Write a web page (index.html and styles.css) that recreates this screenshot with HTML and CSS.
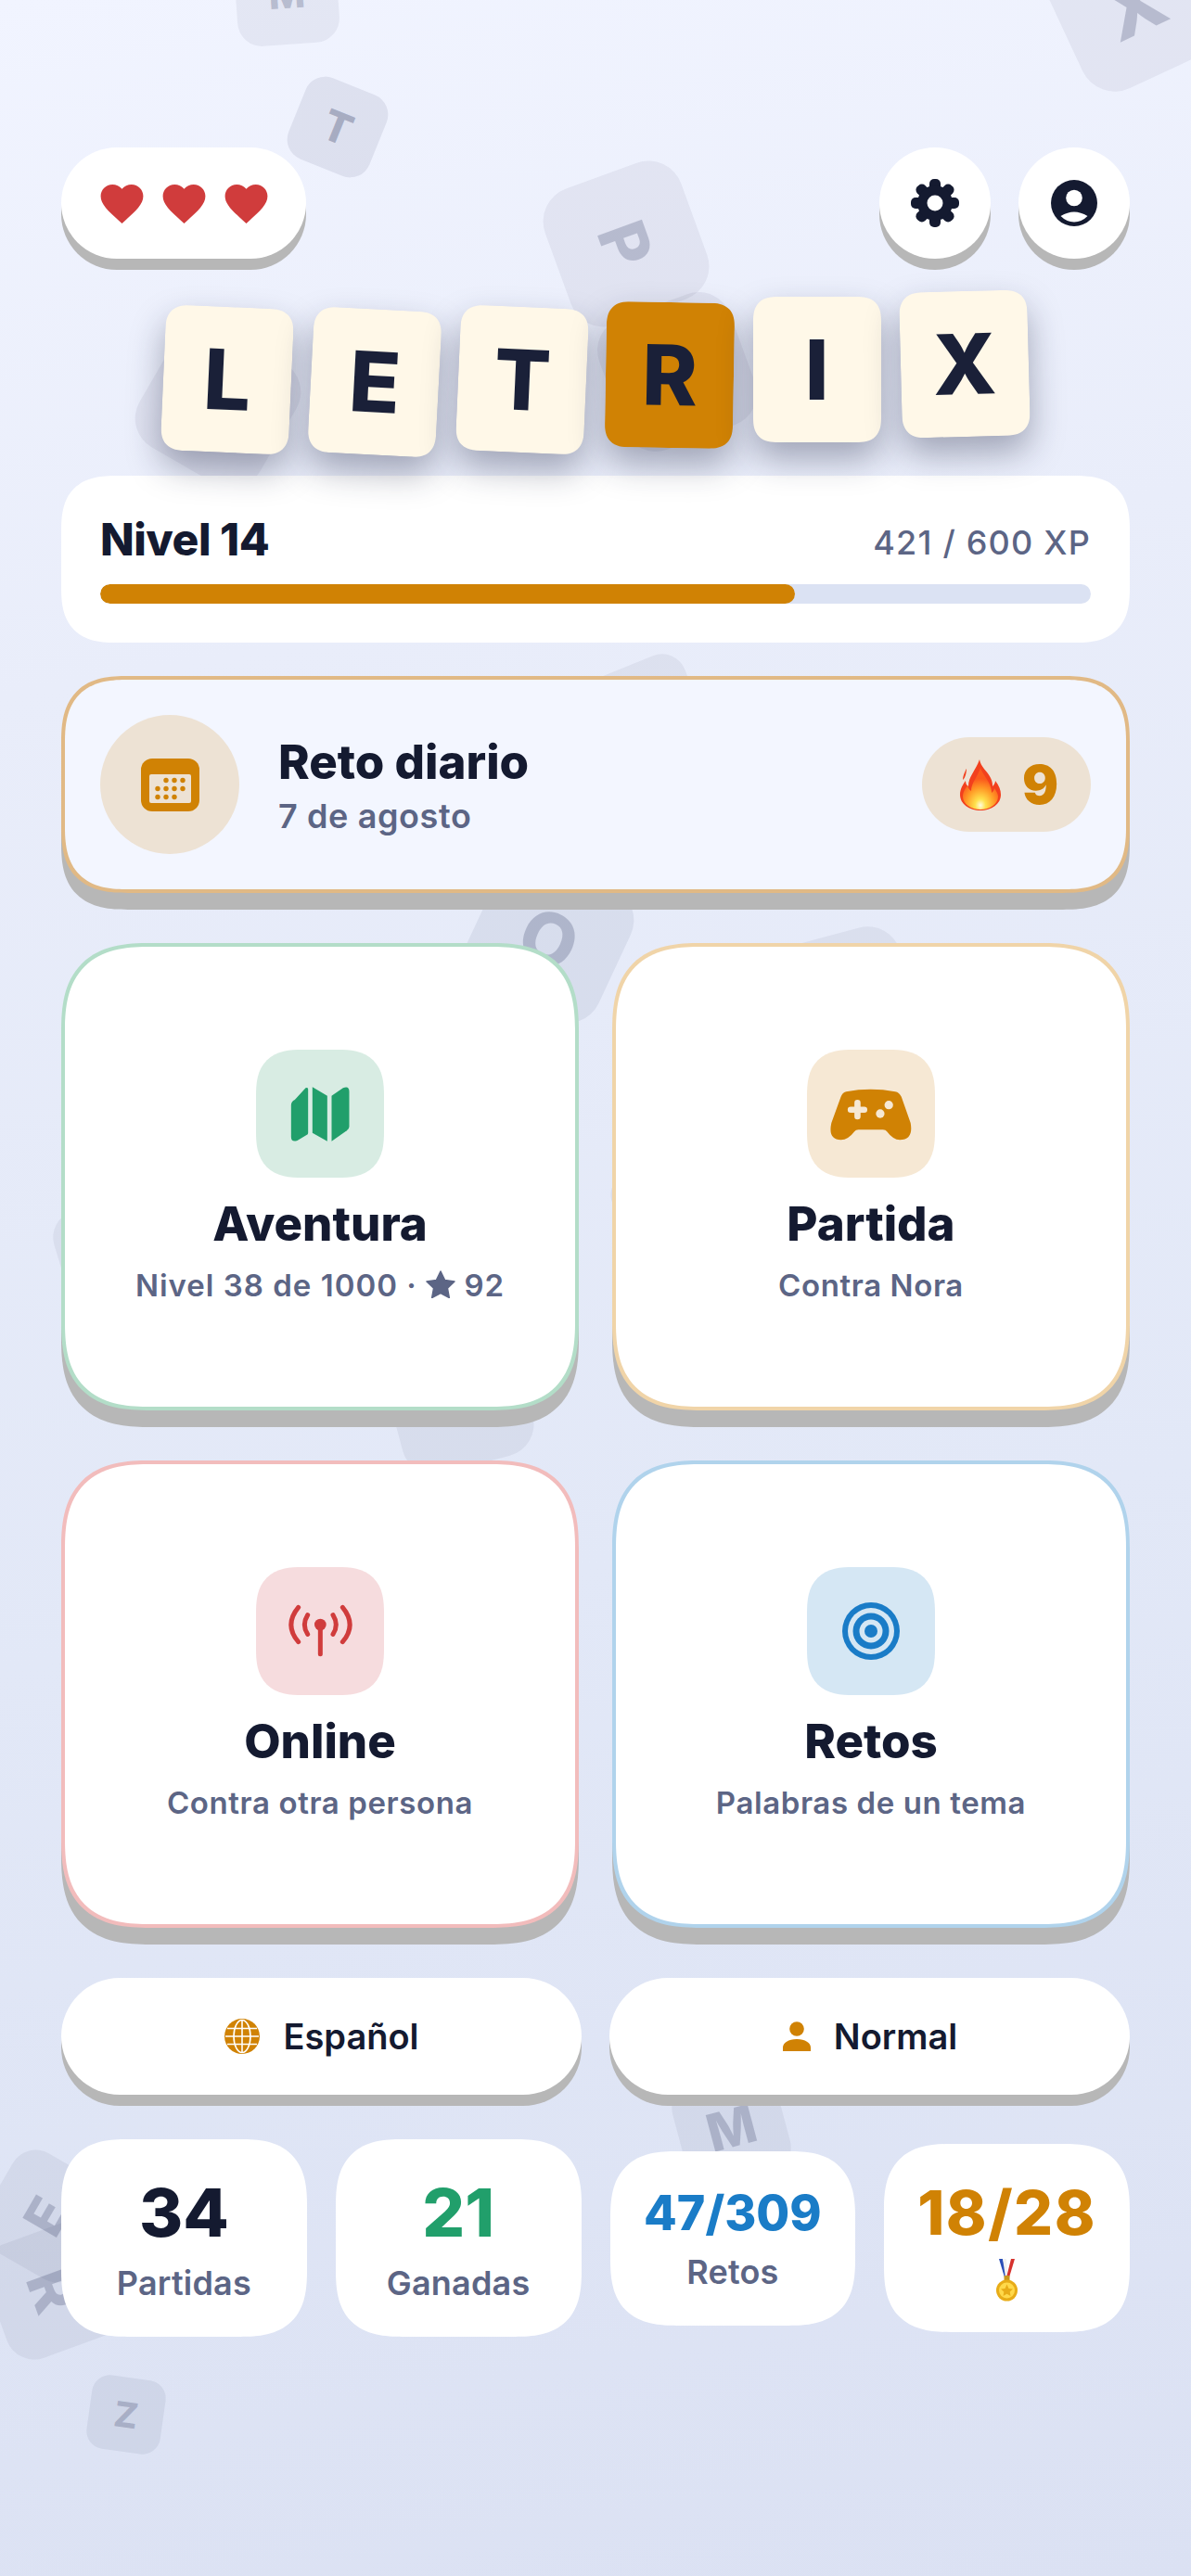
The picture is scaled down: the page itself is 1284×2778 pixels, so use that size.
FILE: index.html
```html
<!DOCTYPE html>
<html lang="es">
<head>
<meta charset="utf-8">
<title>Letrix</title>
<link rel="stylesheet" href="styles.css">
</head>
<body>
<div class="screen">
  <div class="scatter">
    <div class="bt t-m">M</div>
    <div class="bt t-x">X</div>
    <div class="bt t-t">T</div>
    <div class="bt t-p">P</div>
    <div class="bt t-l1"></div>
    <div class="bt t-r1"></div>
    <div class="bt t-d"></div>
    <div class="bt t-o">O</div>
    <div class="bt t-q"></div>
    <div class="bt t-a"></div>
    <div class="bt t-b"></div>
    <div class="bt t-c"></div>
    <div class="bt t-mm">M</div>
    <div class="bt t-e">E</div>
    <div class="bt t-rr">R</div>
    <div class="bt t-z">Z</div>
  </div>

  <main class="content">
    <header class="topbar">
      <div class="lives raised">
        <svg class="heart" viewBox="0 0 24 24"><path d="M12 21.35l-1.45-1.32C5.4 15.36 2 12.28 2 8.5 2 5.42 4.42 3 7.5 3c1.74 0 3.41.81 4.5 2.09C13.09 3.81 14.76 3 16.5 3 19.58 3 22 5.42 22 8.5c0 3.78-3.4 6.86-8.55 11.54L12 21.35z"/></svg>
        <svg class="heart" viewBox="0 0 24 24"><path d="M12 21.35l-1.45-1.32C5.4 15.36 2 12.28 2 8.5 2 5.42 4.42 3 7.5 3c1.74 0 3.41.81 4.5 2.09C13.09 3.81 14.76 3 16.5 3 19.58 3 22 5.42 22 8.5c0 3.78-3.4 6.86-8.55 11.54L12 21.35z"/></svg>
        <svg class="heart" viewBox="0 0 24 24"><path d="M12 21.35l-1.45-1.32C5.4 15.36 2 12.28 2 8.5 2 5.42 4.42 3 7.5 3c1.74 0 3.41.81 4.5 2.09C13.09 3.81 14.76 3 16.5 3 19.58 3 22 5.42 22 8.5c0 3.78-3.4 6.86-8.55 11.54L12 21.35z"/></svg>
      </div>
      <div class="top-actions">
        <div class="round raised">
          <svg class="top-icon" viewBox="-30 -30 60 60">
            <g class="gear">
              <rect x="-6" y="-26" width="12" height="52" rx="5"/>
              <rect x="-6" y="-26" width="12" height="52" rx="5" transform="rotate(45)"/>
              <rect x="-6" y="-26" width="12" height="52" rx="5" transform="rotate(90)"/>
              <rect x="-6" y="-26" width="12" height="52" rx="5" transform="rotate(135)"/>
              <circle r="19"/>
            </g>
            <circle class="cut" r="8.5"/>
          </svg>
        </div>
        <div class="round raised">
          <svg class="top-icon" viewBox="-30 -30 60 60">
            <circle class="dark" r="25"/>
            <circle class="cut" cy="-5.5" r="8.8"/>
            <path class="cut" d="M-14.5 14Q-7 9.5 0 9.5Q7 9.5 14.5 14Q8 20.5 0 20.5Q-8 20.5-14.5 14Z"/>
          </svg>
        </div>
      </div>
    </header>

    <h1 class="logo">
      <span class="lt lt-1">L</span><span class="lt lt-2">E</span><span class="lt lt-3">T</span><span class="lt lt-4 lt-hot">R</span><span class="lt lt-5">I</span><span class="lt lt-6">X</span>
    </h1>

    <section class="level">
      <div class="level-head">
        <span class="level-name">Nivel 14</span>
        <span class="level-xp">421 / 600 XP</span>
      </div>
      <div class="track"><div class="fill"></div></div>
    </section>

    <section class="daily">
      <div class="daily-badge">
        <svg class="cal" viewBox="0 0 63 57">
          <rect class="cal-body" width="63" height="57" rx="12"/>
          <rect class="cal-page" x="9" y="17" width="45" height="31" rx="2"/>
          <g class="cal-dots">
            <circle cx="27" cy="23.5" r="2.7"/><circle cx="36" cy="23.5" r="2.7"/><circle cx="45" cy="23.5" r="2.7"/>
            <circle cx="18" cy="32.5" r="2.7"/><circle cx="27" cy="32.5" r="2.7"/><circle cx="36" cy="32.5" r="2.7"/><circle cx="45" cy="32.5" r="2.7"/>
            <circle cx="18" cy="41.5" r="2.7"/><circle cx="27" cy="41.5" r="2.7"/><circle cx="36" cy="41.5" r="2.7"/>
          </g>
        </svg>
      </div>
      <div class="daily-text">
        <div class="daily-title">Reto diario</div>
        <div class="daily-date">7 de agosto</div>
      </div>
      <div class="streak">
        <svg class="flame" viewBox="0 0 44 55">
          <defs>
            <radialGradient id="fg" cx="0.5" cy="0.9" r="0.75">
              <stop offset="0" stop-color="#fffde0"/>
              <stop offset="0.2" stop-color="#ffe14d"/>
              <stop offset="0.55" stop-color="#ff9a26"/>
              <stop offset="0.85" stop-color="#fb5a1c"/>
            </radialGradient>
          </defs>
          <path fill="#f2401d" d="M21 0C22 8 30 13 33 20C35 24 35 27 35 29C37 27 38 25 38 23C42 28 44 33 44 38C44 48 34 55 22 55C10 55 0 48 0 38C0 32 3 27 6 23C6 26 7 28 9 29C9 18 17 12 21 0Z"/>
          <path fill="url(#fg)" d="M22 9C24 16 31 22 33 30C34 33 34 35 34 36C36 34 37 33 37 31C39 34 41 37 41 40C41 48 32 54 22 54C12 54 3 48 3 40C3 35 6 31 8 28C9 31 10 33 12 34C12 25 19 19 22 9Z"/>
          <path fill="#f2401d" d="M5 14C6 12 6 11 7 10C7 13 6 20 3 22C3 19 4 16 5 14Z"/>
        </svg>
        <span class="streak-num">9</span>
      </div>
    </section>

    <section class="modes">
      <article class="mode mode-green">
        <div class="mode-icon">
          <svg class="ic-map" viewBox="155 183 197 183">
            <path d="M172 228L207 190Q215 186 215 194V335Q215 340 210 342L180 360Q160 366 160 348V245Q160 234 172 228Z"/>
            <path d="M229 187L277 215V362L229 335Z"/>
            <path d="M291 215L328 190Q348 182 348 202V315Q348 322 340 328L291 362Z"/>
          </svg>
        </div>
        <h2 class="mode-title">Aventura</h2>
        <p class="mode-sub mode-sub-wide">Nivel 38 de 1000 · <svg class="star" viewBox="0 0 32 30"><path d="M16 1L20.6 10.6L31 12L23.4 19.2L25.3 29.5L16 24.5L6.7 29.5L8.6 19.2L1 12L11.4 10.6Z"/></svg> 92</p>
      </article>
      <article class="mode mode-orange">
        <div class="mode-icon">
          <svg class="ic-pad" viewBox="130 183 272 177">
            <path d="M185 198Q265 183 345 198Q358 200 365 215L395 300Q405 355 360 355Q338 355 318 328Q314 322 305 322H225Q216 322 212 328Q192 355 168 355Q125 355 137 300L168 215Q172 202 185 198Z"/>
            <path class="pad-mark" d="M222 235V279M200 257H244"/>
            <circle class="pad-dot" cx="296" cy="270" r="14"/>
            <circle class="pad-dot" cx="324" cy="242" r="14"/>
          </svg>
        </div>
        <h2 class="mode-title">Partida</h2>
        <p class="mode-sub">Contra Nora</p>
      </article>
      <article class="mode mode-red">
        <div class="mode-icon">
          <svg class="ic-ant" viewBox="150 175 213 180">
            <circle cx="256" cy="244" r="19"/>
            <path d="M256 244V339"/>
            <path d="M215 213Q195 245 215 275M297 213Q317 245 297 275"/>
            <path d="M185 188Q138 245 185 300M328 188Q375 245 328 300"/>
          </svg>
        </div>
        <h2 class="mode-title">Online</h2>
        <p class="mode-sub">Contra otra persona</p>
      </article>
      <article class="mode mode-blue">
        <div class="mode-icon">
          <svg class="ic-target" viewBox="-32 -32 64 64">
            <circle class="tb" r="31"/><circle class="tl" r="25"/><circle class="tb" r="19.5"/><circle class="tl" r="12.5"/><circle class="tb" r="7"/>
          </svg>
        </div>
        <h2 class="mode-title">Retos</h2>
        <p class="mode-sub">Palabras de un tema</p>
      </article>
    </section>

    <section class="prefs">
      <div class="pref raised">
        <svg class="ic-globe" viewBox="-20 -20 40 40">
          <circle class="gb" r="19"/>
          <g class="gl">
            <ellipse rx="9" ry="17.5"/>
            <path d="M0-18V18M-18 0H18M-16-8.500H16M-16 8.500H16"/>
          </g>
        </svg>
        <span>Español</span>
      </div>
      <div class="pref raised">
        <svg class="ic-user" viewBox="0 0 32 32">
          <circle cx="16" cy="8" r="7.800"/>
          <path d="M1 32V28C1 23 7 19 16 19C25 19 31 23 31 28V32Z"/>
        </svg>
        <span>Normal</span>
      </div>
    </section>

    <section class="stats">
      <div class="stat"><div class="num num-lg c-dark">34</div><div class="lab">Partidas</div></div>
      <div class="stat"><div class="num num-lg c-green">21</div><div class="lab">Ganadas</div></div>
      <div class="stat"><div class="num num-sm c-blue">47/309</div><div class="lab">Retos</div></div>
      <div class="stat"><div class="num num-md c-orange">18/28</div>
        <div class="lab">
          <svg class="medal" viewBox="0 0 23 46">
            <path fill="#2b4fb8" d="M3 0H7L12 20H9Z"/>
            <path fill="#f2f2f2" d="M7 0H11L12.500 20H10Z"/>
            <path fill="#d6322e" d="M16 0H20L14 20H11Z"/>
            <rect x="8.500" y="18" width="6" height="6" rx="1" fill="#c9971c"/>
            <circle cx="11.500" cy="34" r="11.500" fill="#e8ac17"/>
            <circle cx="11.500" cy="34" r="8.500" fill="#ffd94a"/>
            <path fill="#e8ac17" d="M11.500 27.500L13.500 32L18 32.500L14.700 35.500L15.500 40L11.500 37.800L7.500 40L8.300 35.500L5 32.500L9.500 32Z"/>
          </svg>
        </div>
      </div>
    </section>
  </main>
</div>
</body>
</html>
```

FILE: styles.css
```css
* { box-sizing: border-box; }
html, body { margin: 0; padding: 0; }
body { font-family: Inter, "Noto Sans", sans-serif; color: #141a30; }

.screen {
  position: relative;
  width: 1284px;
  height: 2778px;
  overflow: hidden;
  background: linear-gradient(170deg, #f1f4ff 0%, #e9edfa 25%, #e2e8f7 60%, #dbe1f3 100%);
}

/* scattered background letter tiles: a free canvas */
.scatter { position: absolute; inset: 0; }
.bt {
  position: absolute;
  display: flex;
  align-items: center;
  justify-content: center;
  font-weight: 800;
  color: rgba(30, 40, 80, 0.22);
  background: rgba(30, 40, 75, 0.06);
  border-radius: 24%;
}
.t-m  { left: 254px; top: -62px; width: 110px; height: 110px; font-size: 42px; transform: rotate(-4deg); }
.t-x  { left: 1142px; top: -75px; width: 160px; height: 160px; font-size: 84px; transform: rotate(-25deg); }
.t-t  { left: 317px; top: 90px; width: 94px; height: 94px; font-size: 46px; transform: rotate(22deg); color: rgba(30, 40, 80, 0.28); background: rgba(30, 40, 80, 0.085); }
.t-p  { left: 597px; top: 185px; width: 156px; height: 156px; font-size: 70px; transform: rotate(70deg); }
.t-l1 { left: 160px; top: 362px; width: 150px; height: 150px; transform: rotate(30deg); }
.t-r1 { left: 655px; top: 326px; width: 150px; height: 150px; transform: rotate(-20deg); }
.t-d  { left: 643px; top: 714px; width: 110px; height: 110px; transform: rotate(-22deg); }
.t-o  { left: 514px; top: 934px; width: 156px; height: 156px; font-size: 78px; transform: rotate(25deg); background: rgba(30, 40, 80, 0.07); }
.t-q  { left: 833px; top: 1008px; width: 150px; height: 150px; transform: rotate(-15deg); }
.t-a  { left: 65px; top: 1295px; width: 120px; height: 120px; transform: rotate(-17deg); }
.t-b  { left: 667px; top: 1235px; width: 90px; height: 90px; transform: rotate(30deg); }
.t-c  { left: 422px; top: 1437px; width: 145px; height: 145px; transform: rotate(-15deg); }
.t-mm { left: 731px; top: 2237px; width: 115px; height: 115px; font-size: 56px; transform: rotate(-15deg); }
.t-e  { left: -10px; top: 2330px; width: 120px; height: 120px; font-size: 58px; transform: rotate(-60deg); }
.t-rr { left: -8px; top: 2405px; width: 130px; height: 130px; font-size: 66px; transform: rotate(70deg); }
.t-z  { left: 96px; top: 2564px; width: 80px; height: 80px; font-size: 38px; transform: rotate(8deg); background: rgba(30, 40, 80, 0.07); }

.content {
  position: relative;
  display: flex;
  flex-direction: column;
  padding: 159px 66px 0;
}

.raised { background: #fff; box-shadow: 0 12px 0 #b7b7b7; }

/* top bar */
.topbar { display: flex; justify-content: space-between; height: 120px; }
.lives {
  width: 264px;
  height: 120px;
  border-radius: 60px;
  display: flex;
  align-items: center;
  justify-content: center;
  gap: 12px;
}
.heart { width: 55px; height: 55px; fill: #d03c3c; }
.top-actions { display: flex; gap: 30px; }
.round {
  width: 120px;
  height: 120px;
  border-radius: 50%;
  display: flex;
  align-items: center;
  justify-content: center;
}
.top-icon { width: 60px; height: 60px; }
.gear, .dark { fill: #141a30; }
.cut { fill: #fff; }

/* logo */
.logo {
  margin: 51px 0 27px;
  height: 156px;
  display: flex;
  justify-content: center;
  align-items: center;
  gap: 21px;
  font-size: 90px;
  font-weight: 800;
}
.lt {
  width: 138px;
  height: 157px;
  border-radius: 27px;
  corner-shape: superellipse(1.4);
  display: flex;
  align-items: center;
  justify-content: center;
  background: #fff8e8;
  color: #1a2038;
  box-shadow: 0 18px 36px rgba(30, 35, 65, 0.36);
}
.lt-hot { background: #d08204; }
.lt-1 { transform: translateY(1px) rotate(2.5deg); }
.lt-2 { transform: translateY(3.500px) rotate(3deg); }
.lt-3 { transform: translateY(1px) rotate(2.5deg); }
.lt-4 { transform: translateY(-4px) rotate(1deg); }
.lt-5 { transform: translateY(-10px); }
.lt-6 { transform: translateY(-16px) rotate(-1.5deg); }

/* level */
.level {
  height: 180px;
  padding: 0 42px;
  background: #fff;
  border-radius: 60px;
  corner-shape: superellipse(1.4);
  display: flex;
  flex-direction: column;
}
.level-head {
  height: 117px;
  padding-bottom: 21px;
  display: flex;
  align-items: flex-end;
  justify-content: space-between;
}
.level-name { font-size: 48px; font-weight: 800; line-height: 54px; letter-spacing: -0.5px; }
.level-xp { font-size: 36px; font-weight: 500; line-height: 47px; letter-spacing: 1.2px; color: #5c6585; }
.track { height: 21px; border-radius: 11px; background: #dbe2f3; overflow: hidden; }
.fill { width: 70.17%; height: 100%; border-radius: 11px; background: #d08204; }

/* daily */
.daily {
  margin-top: 36px;
  height: 234px;
  padding: 0 38px;
  background: #f3f6ff;
  border: 4px solid #e1b985;
  border-radius: 72px;
  corner-shape: superellipse(1.4);
  box-shadow: 0 18px 0 #b7b7b7;
  display: flex;
  align-items: center;
}
.daily-badge {
  width: 150px;
  height: 150px;
  border-radius: 50%;
  background: #ede2d4;
  display: flex;
  align-items: center;
  justify-content: center;
}
.cal { width: 63px; height: 57px; }
.cal-body, .cal-dots { fill: #d08204; }
.cal-page { fill: #ede2d4; }
.daily-text { margin-left: 42px; flex: 1; }
.daily-title { font-size: 51px; font-weight: 800; line-height: 61px; }
.daily-date { margin-top: 7px; font-size: 36px; font-weight: 600; line-height: 43px; letter-spacing: 0.6px; color: #5c6585; }
.streak {
  width: 182px;
  height: 102px;
  padding-left: 6px;
  border-radius: 51px;
  background: #ede2d4;
  display: flex;
  align-items: center;
  justify-content: center;
  gap: 23px;
}
.flame { width: 44px; height: 55px; }
.streak-num { font-size: 58px; font-weight: 900; line-height: 1; color: #d08204; }

/* modes */
.modes {
  margin-top: 54px;
  display: grid;
  grid-template-columns: 558px 558px;
  column-gap: 36px;
  row-gap: 54px;
}
.mode {
  height: 504px;
  background: #fff;
  border: 4px solid;
  border-radius: 96px;
  corner-shape: superellipse(1.4);
  box-shadow: 0 18px 0 #b7b7b7;
  display: flex;
  flex-direction: column;
  align-items: center;
  justify-content: center;
}
.mode-green { border-color: #b3ddc8; }
.mode-orange { border-color: #f0d4a8; }
.mode-red { border-color: #f2bcbc; }
.mode-blue { border-color: #b0d3ec; }
.mode-icon {
  width: 138px;
  height: 138px;
  border-radius: 50px;
  corner-shape: superellipse(1.4);
  display: flex;
  align-items: center;
  justify-content: center;
}
.mode-green .mode-icon { background: #d8ece3; }
.mode-orange .mode-icon { background: #f6e8d4; }
.mode-red .mode-icon { background: #f6dcde; }
.mode-blue .mode-icon { background: #d5e7f4; }
.mode-title { margin: 19px 0 0; font-size: 51px; font-weight: 800; line-height: 61px; }
.mode-sub { margin: 16px 0 0; font-size: 33px; font-weight: 600; line-height: 40px; letter-spacing: 0.6px; color: #5c6585; display: flex; align-items: center; white-space: pre; }
.mode-sub-wide { letter-spacing: 1px; }
.star { width: 32px; height: 30px; margin-bottom: 3px; fill: #5c6585; stroke: #5c6585; stroke-width: 1.5; stroke-linejoin: round; }
.ic-map { width: 66px; height: 61px; fill: #219f6b; }
.ic-pad { width: 90px; height: 59px; fill: #d08204; }
.pad-mark { fill: none; stroke: #f6e8d4; stroke-width: 20; stroke-linecap: round; }
.pad-dot { fill: #f6e8d4; }
.ic-ant { width: 71px; height: 60px; fill: #d03c3c; }
.ic-ant path { fill: none; stroke: #d03c3c; stroke-linecap: round; stroke-width: 15; }
.ic-target { width: 64px; height: 64px; }
.tb { fill: #1a7cc7; }
.tl { fill: #d5e7f4; }

/* preferences */
.prefs { margin-top: 54px; display: grid; grid-template-columns: 561px 561px; column-gap: 30px; }
.pref {
  height: 126px;
  border-radius: 63px;
  display: flex;
  align-items: center;
  justify-content: center;
  gap: 24px;
  font-size: 38px;
  font-weight: 600;
}
.ic-globe { width: 40px; height: 40px; }
.gb { fill: #d08204; }
.gl { fill: none; stroke: #fff; stroke-width: 1.6; }
.ic-user { width: 32px; height: 32px; fill: #d08204; }

/* stats */
.stats {
  margin-top: 48px;
  display: grid;
  grid-template-columns: repeat(4, 1fr);
  column-gap: 31px;
  align-items: center;
}
.stat {
  padding: 36px 0;
  background: #fff;
  border-radius: 72px;
  corner-shape: superellipse(1.4);
  text-align: center;
}
.num { font-weight: 800; }
.num-lg { font-size: 72px; line-height: 86px; }
.num-md { font-size: 66px; line-height: 76px; letter-spacing: 1.5px; }
.num-sm { font-size: 52px; line-height: 61px; }
.c-dark { color: #141a30; }
.c-green { color: #219f6b; }
.c-blue { color: #1a7cc7; }
.c-orange { color: #d08204; }
.lab {
  margin-top: 12px;
  height: 43px;
  font-size: 36px;
  font-weight: 600;
  line-height: 43px;
  letter-spacing: 0.2px;
  color: #5c6585;
}
.medal { width: 23px; height: 46px; display: block; margin: 0 auto; }
```
